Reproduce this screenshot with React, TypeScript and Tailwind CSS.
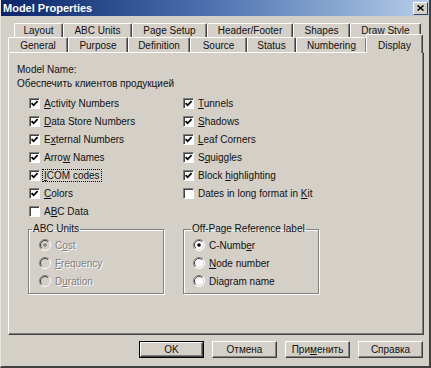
import type { ReactNode } from "react";

const topTabs = [
  { label: "Layout", w: 49 },
  { label: "ABC Units", w: 69 },
  { label: "Page Setup", w: 75 },
  { label: "Header/Footer", w: 86 },
  { label: "Shapes", w: 57 },
  { label: "Draw Style", w: 71 },
];

const frontTabs = [
  { label: "General", w: 60 },
  { label: "Purpose", w: 60 },
  { label: "Definition", w: 62 },
  { label: "Source", w: 57 },
  { label: "Status", w: 49 },
  { label: "Numbering", w: 71 },
];

function U({ children }: { children: ReactNode }) {
  return <span className="underline underline-offset-[1px]">{children}</span>;
}

function CheckBox({ checked }: { checked: boolean }) {
  return (
    <span className="w-[11px] h-[11px] shrink-0 bg-white border border-t-[#808080] border-l-[#808080] border-r-white border-b-white shadow-[inset_1px_1px_0_#404040] flex items-center justify-center">
      {checked && (
        <svg width="9" height="9" viewBox="0 0 9 9">
          <path d="M1.6 4.2 L3.6 6.3 L7.6 2.2" stroke="#000" strokeWidth="1.8" fill="none" />
        </svg>
      )}
    </span>
  );
}

function Radio({ checked, disabled }: { checked: boolean; disabled?: boolean }) {
  return (
    <svg width="12" height="12" viewBox="0 0 12 12" className="shrink-0">
      <circle cx="6" cy="6" r="5.5" fill={disabled ? "#d4d0c8" : "#fff"} />
      <path d="M2.1 9.9 A5.5 5.5 0 0 1 9.9 2.1" stroke="#808080" fill="none" />
      <path d="M9.9 2.1 A5.5 5.5 0 0 1 2.1 9.9" stroke="#fff" fill="none" />
      <path d="M2.8 9.2 A4.5 4.5 0 0 1 9.2 2.8" stroke="#404040" fill="none" />
      <path d="M9.2 2.8 A4.5 4.5 0 0 1 2.8 9.2" stroke="#d4d0c8" fill="none" />
      {checked && <circle cx="6" cy="6" r="1.8" fill={disabled ? "#808080" : "#000"} />}
    </svg>
  );
}

function CheckRow({ checked, focus, children }: { checked: boolean; focus?: boolean; children: ReactNode }) {
  return (
    <div className="h-[18px] flex items-center gap-[4px]">
      <CheckBox checked={checked} />
      <span className={focus ? "outline outline-1 outline-dotted outline-black leading-[11px] px-px -ml-px" : ""}>
        {children}
      </span>
    </div>
  );
}

function RadioRow({ checked, disabled, children }: { checked: boolean; disabled?: boolean; children: ReactNode }) {
  return (
    <div className="h-[18px] flex items-center gap-[4px]">
      <Radio checked={checked} disabled={disabled} />
      <span className={disabled ? "text-[#808080] [text-shadow:1px_1px_0_#fff]" : ""}>{children}</span>
    </div>
  );
}

function Button({ children, def }: { children: ReactNode; def?: boolean }) {
  return (
    <div className={`w-[65px] h-[17px] ${def ? "border border-black" : ""}`}>
      <div className="w-full h-full flex items-center justify-center border-t border-l border-white border-r border-b border-r-[#404040] border-b-[#404040] shadow-[inset_-1px_-1px_0_#808080]">
        {children}
      </div>
    </div>
  );
}

export default function App() {
  return (
    <div className="w-[431px] h-[368px] bg-[#d4d0c8] flex flex-col overflow-hidden border-l border-l-[#e8e6e0] border-r-2 border-b-2 border-r-[#404040] border-b-[#404040] text-[10px] text-[#111] font-['Liberation_Sans',Arial,sans-serif]">
      <div className="h-[16px] shrink-0 bg-linear-to-r from-[#0a246a] via-[#4f74b0] to-[#b6cde8] flex items-center justify-between pl-[2px] pr-[1px]">
        <span className="text-white font-bold text-[11px] leading-none">Model Properties</span>
        <span className="w-[15px] h-[13px] bg-[#d4d0c8] border-t border-l border-white border-r border-b border-r-[#404040] border-b-[#404040] flex items-center justify-center">
          <svg width="7" height="6" viewBox="0 0 7 6">
            <path d="M0.5 0.5 L6.5 5.5 M6.5 0.5 L0.5 5.5" stroke="#000" strokeWidth="1.5" />
          </svg>
        </span>
      </div>

      <div className="mt-[7px] h-[14px] flex pl-[13px]">
        {topTabs.map((t) => (
          <div
            key={t.label}
            style={{ width: t.w }}
            className="h-[16px] flex items-start pt-[1px] leading-[11px] justify-center border-t border-l border-white border-r border-r-[#404040] shadow-[inset_-1px_0_0_#808080] rounded-t-[2px]"
          >
            {t.label}
          </div>
        ))}
      </div>

      <div className="h-[15px] flex pl-[7px] relative">
        {frontTabs.map((t) => (
          <div
            key={t.label}
            style={{ width: t.w }}
            className="h-[15px] bg-[#d4d0c8] flex items-center justify-center border-t border-l border-white border-r border-r-[#404040] shadow-[inset_-1px_0_0_#808080] rounded-t-[2px]"
          >
            {t.label}
          </div>
        ))}
        <div className="w-[57px] h-[19px] -mt-[3px] -ml-px relative z-10 bg-[#d4d0c8] flex items-start pt-[3px] justify-center border-t border-l border-white border-r border-r-[#404040] shadow-[inset_-1px_0_0_#808080] rounded-t-[2px]">
          Display
        </div>
      </div>

      <div className="ml-[7px] w-[416px] h-[283px] border-t border-l border-white border-r border-b border-r-[#404040] border-b-[#404040] shadow-[inset_-1px_-1px_0_#808080] px-[8px] pt-[10px]">
        <div className="leading-[14px]">Model Name:</div>
        <div className="leading-[14px]">Обеспечить клиентов продукцией</div>

        <div className="mt-[3px] pl-[12px] flex">
          <div className="w-[154px] flex flex-col">
            <CheckRow checked><U>A</U>ctivity Numbers</CheckRow>
            <CheckRow checked><U>D</U>ata Store Numbers</CheckRow>
            <CheckRow checked>E<U>x</U>ternal Numbers</CheckRow>
            <CheckRow checked>Arro<U>w</U> Names</CheckRow>
            <CheckRow checked focus><U>I</U>COM codes</CheckRow>
            <CheckRow checked><U>C</U>olors</CheckRow>
            <CheckRow checked={false}>A<U>B</U>C Data</CheckRow>
          </div>
          <div className="flex flex-col">
            <CheckRow checked><U>T</U>unnels</CheckRow>
            <CheckRow checked><U>S</U>hadows</CheckRow>
            <CheckRow checked><U>L</U>eaf Corners</CheckRow>
            <CheckRow checked>S<U>q</U>uiggles</CheckRow>
            <CheckRow checked>Block <U>h</U>ighlighting</CheckRow>
            <CheckRow checked={false}>Dates in long format in <U>K</U>it</CheckRow>
          </div>
        </div>

        <div className="mt-[3px] pl-[11px] flex gap-[19px]">
          <fieldset className="w-[136px] h-[71px] border border-[#808080] shadow-[1px_1px_0_#fff,inset_1px_1px_0_#fff]">
            <legend className="ml-[3px] px-[1px] leading-[12px]">ABC Units</legend>
            <div className="pl-[10px] pt-[1px]">
              <RadioRow checked disabled>C<U>o</U>st</RadioRow>
              <RadioRow checked={false} disabled><U>F</U>requency</RadioRow>
              <RadioRow checked={false} disabled>D<U>u</U>ration</RadioRow>
            </div>
          </fieldset>
          <fieldset className="w-[136px] h-[71px] border border-[#808080] shadow-[1px_1px_0_#fff,inset_1px_1px_0_#fff]">
            <legend className="ml-[7px] px-[1px] leading-[12px]">Off-Page Reference label</legend>
            <div className="pl-[9px] pt-[1px]">
              <RadioRow checked>C-Numb<U>e</U>r</RadioRow>
              <RadioRow checked={false}><U>N</U>ode number</RadioRow>
              <RadioRow checked={false}>Diagram name</RadioRow>
            </div>
          </fieldset>
        </div>
      </div>

      <div className="mt-[6px] flex justify-end gap-[8px] pr-[6px]">
        <Button def>OK</Button>
        <Button>Отмена</Button>
        <Button>При<U>м</U>енить</Button>
        <Button>Справка</Button>
      </div>
    </div>
  );
}
